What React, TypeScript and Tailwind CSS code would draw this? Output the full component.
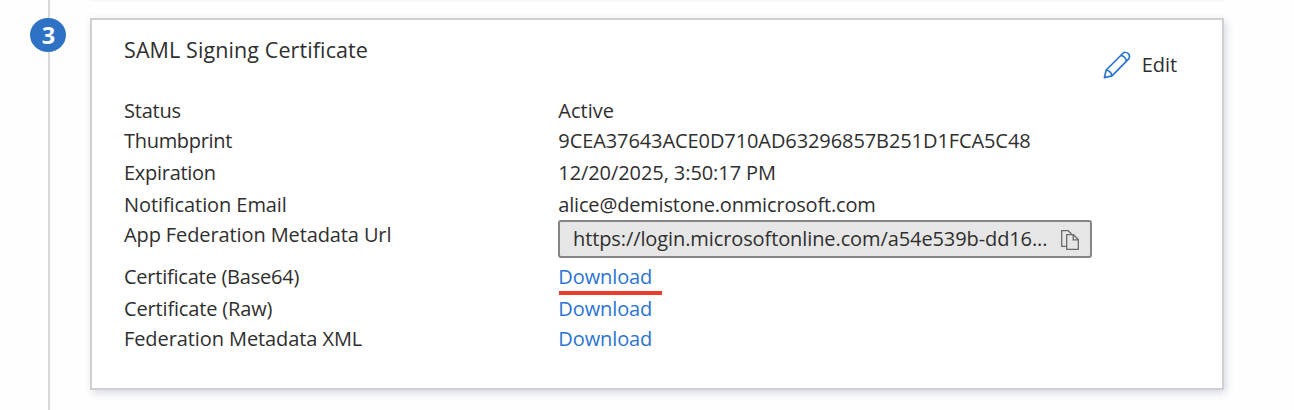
import type { ReactNode } from "react";

const link = "text-[#2b74cf]";

function Row({ label, height, track, children }: { label: string; height: string; track: string; children: ReactNode }) {
  return (
    <div className={`flex items-start ${height}`}>
      <div className={`w-[434.3px] shrink-0 ${track}`}>{label}</div>
      {children}
    </div>
  );
}

function PencilIcon() {
  return (
    <svg className="h-[28px] w-[28px]" viewBox="0 0 28 28" fill="none" stroke="#2b74cf" strokeWidth="1.7" strokeLinejoin="round">
      <path d="M1.4 26.6 3.2 19 19.8 2.5C21.2 1.1 23.7 1.1 25.3 2.7 26.9 4.3 26.9 6.8 25.5 8.2L9 24.8Z" />
      <path d="M17.8 4.5C20.3 4.6 23.2 7.2 23.5 10.2M3.2 19C5.9 19.2 8.7 22 9 24.8" />
    </svg>
  );
}

function CopyIcon() {
  return (
    <svg className="h-[22px] w-[20px]" viewBox="0 0 20 22" fill="none" stroke="#6b6b6b" strokeWidth="1.3">
      <path d="M6 17.3H1.7V1.7H8.2L11.5 5" />
      <path d="M6.7 5.7H13.4L18.3 10.6V20.3H6.7ZM13.2 5.7V10.8H18.3" />
    </svg>
  );
}

export default function App() {
  return (
    <div className="flex h-[410px] w-[1294px] overflow-hidden bg-[#fefefe] font-['Open_Sans','Noto_Sans',sans-serif] text-[20px] leading-[27px] text-[#2f2f2f]">
      <div className="flex w-[90px] shrink-0 flex-col pl-[30px]">
        <div className="ml-[18px] h-[18px] w-[2px] bg-[#d8d8d8]" />
        <div className="flex h-[34px] w-[36px] items-center justify-center rounded-[50%] bg-[#2d72c4] pl-[1px] text-[23.5px] font-bold text-white">3</div>
        <div className="ml-[18px] w-[2px] flex-1 bg-[#d8d8d8]" />
      </div>
      <div className="w-[1134px] shrink-0">
        <div className="h-px bg-[#f6f7f7]" />
        <div className="h-px bg-[#fafbfb]" />
        <section className="mt-[16px] h-[372px] border-2 border-[#d0d0d0] bg-white shadow-[2px_3px_8px_rgba(40,60,110,0.19)]">
          <header className="flex h-[77px] justify-between pl-[32px] pr-[45px]">
            <h2 className="pt-[15px] text-[21.5px] leading-[29px] tracking-[0.1px]">SAML Signing Certificate</h2>
            <button className="flex h-[28px] pt-[31px]">
              <PencilIcon />
              <span className="ml-[11px] tracking-[-0.1px]">Edit</span>
            </button>
          </header>
          <div className="pl-[32px]">
            <Row label="Status" height="h-[30px]" track="tracking-[-0.2px]"><span>Active</span></Row>
            <Row label="Thumbprint" height="h-[32px]" track="tracking-[-0.3px]"><span className="tracking-[-0.09px]">9CEA37643ACE0D710AD63296857B251D1FCA5C48</span></Row>
            <Row label="Expiration" height="h-[32px]" track="tracking-[-0.28px]"><span className="tracking-[-0.08px]">12/20/2025, 3:50:17 PM</span></Row>
            <Row label="Notification Email" height="h-[29px]" track="tracking-[-0.08px]"><span className="tracking-[-0.18px]">alice@demistone.onmicrosoft.com</span></Row>
            <Row label="App Federation Metadata Url" height="h-[43px]" track="pt-px tracking-[-0.11px]">
              <div className="-ml-[0.3px] flex h-[38px] w-[534px] rounded-[3px] border-2 border-[#858585] bg-[#e6e6e6] pl-[13px] pr-[10px] pt-[3px]">
                <span className="flex-1 whitespace-nowrap tracking-[-0.1px]">https://login.microsoftonline.com/a54e539b-dd16...</span>
                <div className="pt-[4px]"><CopyIcon /></div>
              </div>
            </Row>
            <Row label="Certificate (Base64)" height="h-[32px]" track="tracking-[-0.23px]">
              <div>
                <a className={`block tracking-[-0.1px] ${link}`}>Download</a>
                <div className="ml-[0.7px] mt-px h-[4px] w-[103px] bg-[#e93f2a]" />
              </div>
            </Row>
            <Row label="Certificate (Raw)" height="h-[30px]" track="tracking-[-0.16px]"><a className={`tracking-[-0.1px] ${link}`}>Download</a></Row>
            <Row label="Federation Metadata XML" height="h-[27px]" track="tracking-[-0.09px]"><a className={`tracking-[-0.1px] ${link}`}>Download</a></Row>
          </div>
        </section>
      </div>
    </div>
  );
}
